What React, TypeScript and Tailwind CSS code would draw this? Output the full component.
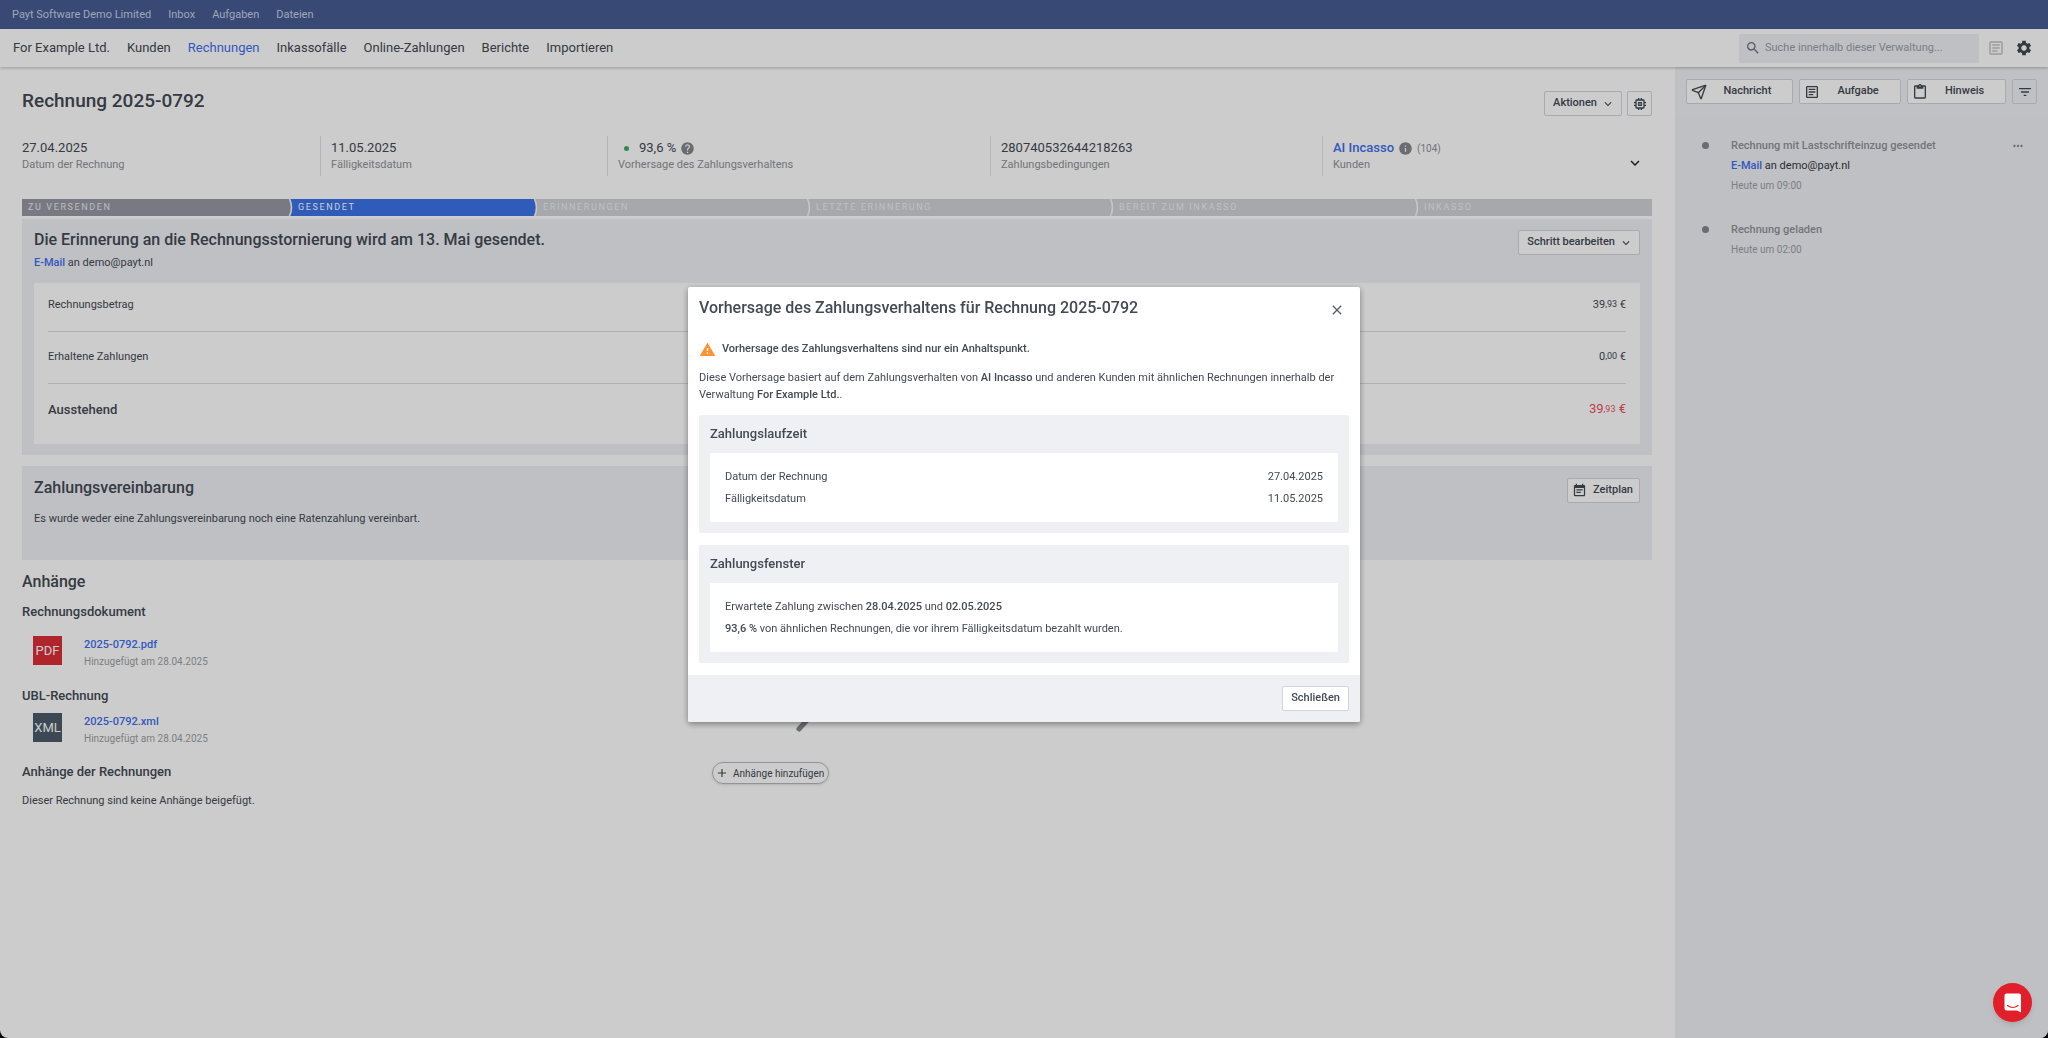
import { ReactNode, useState } from 'react';
import {
  MdAdd,
  MdClose,
  MdContentPaste,
  MdEventNote,
  MdFilterList,
  MdHelp,
  MdInfo,
  MdKeyboardArrowDown,
  MdMemory,
  MdMoreHoriz,
  MdOutlineArticle,
  MdSearch,
  MdSettings,
  MdWarning
} from 'react-icons/md';
import { Send } from 'lucide-react';

const topLinks = ['Payt Software Demo Limited', 'Inbox', 'Aufgaben', 'Dateien'];

const navLinks = [
  'For Example Ltd.',
  'Kunden',
  'Rechnungen',
  'Inkassofälle',
  'Online-Zahlungen',
  'Berichte',
  'Importieren'
];

// Button Component
interface ButtonProps {
  children?: ReactNode;
  label?: string;
  onClick?: () => void;
  className?: string;
}

function Button({ children, label, onClick, className = '' }: ButtonProps) {
  return (
    <button
      type="button"
      aria-label={label}
      onClick={onClick}
      className={`flex h-[25px] items-center rounded-[2px] border border-[#d3d5db] text-[11px] font-medium text-[#434a54] ${className}`}
    >
      {children}
    </button>
  );
}

// Top bars
function Header() {
  return (
    <header>
      <div className="flex h-[29px] items-center gap-[17px] bg-[#465c94] px-3 pt-px text-[11px] text-[#c9d0e2]">
        {topLinks.map((link) => (
          <a key={link} href="#">{link}</a>
        ))}
      </div>
      <div className="relative flex h-[38px] items-center bg-white pr-[15px] pl-[13px] shadow-[0_1px_3px_rgba(0,0,0,0.25)]">
        <nav className="flex flex-1 gap-[17px] text-[13px]">
          {navLinks.map((link) => (
            <a key={link} href="#" className={link === 'Rechnungen' ? 'text-[#3f6fee]' : 'text-[#434a54]'}>
              {link}
            </a>
          ))}
        </nav>
        <label className="flex h-[29px] w-60 items-center gap-1 rounded-[2px] bg-[#eff0f4] px-1.5 text-[#6d727b]">
          <MdSearch className="size-4 shrink-0" />
          <input
            type="search"
            aria-label="Suche"
            placeholder="Suche innerhalb dieser Verwaltung..."
            className="w-full bg-transparent text-[11px] outline-none placeholder:text-[#9a9ea6]"
          />
        </label>
        <button type="button" aria-label="Notizen" className="ml-2 text-[#c3c5ca]">
          <MdOutlineArticle className="size-[18px]" />
        </button>
        <button type="button" aria-label="Einstellungen" className="ml-2.5 text-[#434a54]">
          <MdSettings className="size-[18px]" />
        </button>
      </div>
    </header>
  );
}

// Invoice facts
interface FactProps {
  label: string;
  first?: boolean;
  children: ReactNode;
}

function Fact({ label, first = false, children }: FactProps) {
  return (
    <div className={`flex flex-col pt-1 ${first ? '' : 'border-l border-[#e2e3e7] pl-2.5'}`}>
      <div className="flex h-4 items-center text-[13px] text-[#434a54]">{children}</div>
      <div className="text-[11px] leading-[18px] text-[#8f9298]">{label}</div>
    </div>
  );
}

function Facts() {
  return (
    <div className="mt-5 grid h-10 grid-cols-[298fr_287fr_383fr_332fr_330fr]">
      <Fact label="Datum der Rechnung" first>27.04.2025</Fact>
      <Fact label="Fälligkeitsdatum">11.05.2025</Fact>
      <Fact label="Vorhersage des Zahlungsverhaltens">
        <span className="mr-2.5 ml-1.5 size-[5px] rounded-full bg-[#3fae62]"></span>
        93,6 %
        <MdHelp className="ml-1 size-[15px] text-[#85888f]" />
      </Fact>
      <Fact label="Zahlungsbedingungen">280740532644218263</Fact>
      <div className="flex justify-between border-l border-[#e2e3e7] pr-2 pl-2.5">
        <Fact label="Kunden" first>
          <a href="#" className="font-medium text-[#3f6fee]">AI Incasso</a>
          <MdInfo className="mx-1 size-[15px] text-[#85888f]" />
          <span className="text-[10px] text-[#8f9298]">(104)</span>
        </Fact>
        <button type="button" aria-label="Mehr anzeigen" className="mb-1 self-end text-[#22262c]">
          <MdKeyboardArrowDown className="size-[18px]" />
        </button>
      </div>
    </div>
  );
}

// Workflow steps
const steps = [
  { label: 'ZU VERSENDEN', className: 'bg-[#9698a3] text-[#e9eaee]', tip: '' },
  { label: 'GESENDET', className: 'bg-[#3b73ea] text-white', tip: 'fill-[#9698a3]' },
  { label: 'ERINNERUNGEN', className: 'bg-[#d0d2d6] text-[#eff0f4]', tip: 'fill-[#3b73ea]' },
  { label: 'LETZTE ERINNERUNG', className: 'bg-[#d0d2d6] text-[#eff0f4]', tip: 'fill-[#d0d2d6]' },
  { label: 'BEREIT ZUM INKASSO', className: 'bg-[#d0d2d6] text-[#eff0f4]', tip: 'fill-[#d0d2d6]' },
  { label: 'INKASSO', className: 'bg-[#d0d2d6] text-[#eff0f4]', tip: 'fill-[#d0d2d6]' }
];

function Steps() {
  return (
    <ol className="mt-[23px] grid grid-cols-[268fr_245fr_273fr_303fr_305fr_236fr]">
      {steps.map((step) => (
        <li
          key={step.label}
          className={`relative flex h-[17px] items-center pl-2 text-[9px] tracking-[0.18em] first:pl-1.5 ${step.className}`}
        >
          {step.tip && (
            <svg viewBox="0 0 6 17" className="absolute top-0 -left-0.5 h-[17px] w-1.5">
              <path d="M0 0H1.5Q5.5 8.5 1.5 17H0Z" className={step.tip} />
              <path d="M1.5 0Q5.5 8.5 1.5 17" fill="none" stroke="#f7f8fa" strokeWidth={1.6} />
            </svg>
          )}
          {step.label}
        </li>
      ))}
    </ol>
  );
}

// Amount Component
function Amount({ whole, cents }: { whole: string; cents: string }) {
  return (
    <>
      {whole}
      <span className="relative -top-px text-[9px]">,{cents}</span> €
    </>
  );
}

function StepPanel() {
  return (
    <section className="mt-[3px] bg-[#eff0f4] px-3 pt-[11px] pb-[11px]">
      <div className="flex items-start justify-between">
        <div>
          <h2 className="text-base leading-5 font-medium text-[#434a54]">
            Die Erinnerung an die Rechnungsstornierung wird am 13. Mai gesendet.
          </h2>
          <p className="mt-[5px] text-[11px] leading-4 text-[#434a54]">
            <a href="#" className="font-medium text-[#3f6fee]">E-Mail</a> an demo@payt.nl
          </p>
        </div>
        <Button className="gap-1 bg-white pr-1.5 pl-2">
          Schritt bearbeiten <MdKeyboardArrowDown className="size-3.5" />
        </Button>
      </div>
      <div className="mt-3 bg-white px-3.5 pb-6">
        <table className="w-full text-[11px] leading-5 text-[#434a54]">
          <tbody>
            <tr className="border-b border-[#dcdde1]">
              <th className="pt-3 pb-4 text-left font-normal">Rechnungsbetrag</th>
              <td className="pt-3 pb-4 text-right"><Amount whole="39" cents="93" /></td>
            </tr>
            <tr className="border-b border-[#dcdde1]">
              <th className="pt-[15px] pb-4 text-left font-normal">Erhaltene Zahlungen</th>
              <td className="pt-[15px] pb-4 text-right"><Amount whole="0" cents="00" /></td>
            </tr>
            <tr className="text-[13px]">
              <th className="pt-[15px] text-left font-medium">Ausstehend</th>
              <td className="pt-[15px] text-right text-[#ee4f5f]"><Amount whole="39" cents="93" /></td>
            </tr>
          </tbody>
        </table>
      </div>
    </section>
  );
}

function AgreementPanel() {
  return (
    <section className="mt-[11px] flex items-start justify-between bg-[#eff0f4] px-3 pt-3 pb-[31px]">
      <div>
        <h2 className="text-base leading-5 font-medium text-[#434a54]">Zahlungsvereinbarung</h2>
        <p className="mt-[11px] text-[11px] leading-5 text-[#434a54]">
          Es wurde weder eine Zahlungsvereinbarung noch eine Ratenzahlung vereinbart.
        </p>
      </div>
      <Button className="gap-1.5 bg-white pr-1.5 pl-1">
        <MdEventNote className="size-[15px]" /> Zeitplan
      </Button>
    </section>
  );
}

// Attachments
interface FileRowProps {
  type: string;
  name: string;
  className: string;
}

function FileRow({ type, name, className }: FileRowProps) {
  return (
    <div className={`flex gap-[22px] pl-[11px] ${className}`}>
      <div
        className={`flex size-[29px] items-center justify-center text-[13px] text-white ${type === 'PDF' ? 'bg-[#dc2f38]' : 'bg-[#4c5c6b]'}`}
      >
        {type}
      </div>
      <div className="leading-[17px]">
        <a href="#" className="block text-[11px] font-medium text-[#3f6fee]">{name}</a>
        <p className="text-[10px] text-[#9c9fa5]">Hinzugefügt am 28.04.2025</p>
      </div>
    </div>
  );
}

function Attachments() {
  return (
    <section className="mt-2.5 grid grid-cols-[690fr_940fr] text-[#434a54]">
      <div>
        <h2 className="text-base leading-6 font-medium">Anhänge</h2>
        <h3 className="mt-2 text-[13px] leading-5 font-medium">Rechnungsdokument</h3>
        <FileRow type="PDF" name="2025-0792.pdf" className="mt-3.5" />
        <h3 className="mt-4 text-[13px] leading-5 font-medium">UBL-Rechnung</h3>
        <FileRow type="XML" name="2025-0792.xml" className="mt-[7px]" />
        <h3 className="mt-[15px] text-[13px] leading-5 font-medium">Anhänge der Rechnungen</h3>
        <p className="mt-[9px] text-[11px] leading-5">Dieser Rechnung sind keine Anhänge beigefügt.</p>
      </div>
      <div className="flex flex-col items-start">
        <svg viewBox="0 0 76 76" className="mt-[86px] ml-[82px] size-[76px]" fill="none" stroke="#85888f" strokeWidth={5} strokeLinecap="round">
          <circle cx="42" cy="36" r="24" />
          <path d="M5 73L23 53" />
        </svg>
        <button
          type="button"
          className="mt-[30px] flex h-[22px] items-center gap-1 rounded-full border border-[#b6b8be] pr-1 pl-0.5 text-[10px] shadow-sm"
        >
          <MdAdd className="size-3.5" /> Anhänge hinzufügen
        </button>
      </div>
    </section>
  );
}

// Sidebar with the history
interface EventProps {
  title: string;
  time: string;
  mail?: boolean;
}

function HistoryEvent({ title, time, mail = false }: EventProps) {
  return (
    <li className="flex text-[11px] leading-5">
      <span className="mt-1.5 mr-[22px] size-[7px] rounded-full bg-[#85888f]"></span>
      <div className="flex-1">
        <h3 className="font-medium text-[#8f9298]">{title}</h3>
        {mail && (
          <p className="text-[#333941]">
            <a href="#" className="font-medium text-[#3f6fee]">E-Mail</a> an demo@payt.nl
          </p>
        )}
        <p className="text-[10px] text-[#9c9fa5]">{time}</p>
      </div>
      {mail && (
        <button type="button" aria-label="Mehr" className="h-5 text-[#85888f]">
          <MdMoreHoriz className="size-3.5" />
        </button>
      )}
    </li>
  );
}

function Sidebar() {
  return (
    <aside className="w-[373px] shrink-0 bg-[#eff0f4]">
      <div className="flex h-[49px] items-center gap-1.5 bg-[#f1f2f5] pr-[11px] pl-[11px]">
        <Button className="flex-[107] bg-white pr-1 pl-1">
          <Send className="size-4" strokeWidth={2} />
          <span className="flex-1 text-center">Nachricht</span>
        </Button>
        <Button className="flex-[102] bg-white pr-1 pl-1">
          <MdOutlineArticle className="size-4" />
          <span className="flex-1 text-center">Aufgabe</span>
        </Button>
        <Button className="flex-[98] bg-white pr-1 pl-1">
          <MdContentPaste className="size-4" />
          <span className="flex-1 text-center">Hinweis</span>
        </Button>
        <Button label="Filter" className="w-[25px] justify-center">
          <MdFilterList className="size-4" />
        </Button>
      </div>
      <ul className="flex flex-col gap-6 pt-5 pr-[23px] pl-[27px]">
        <HistoryEvent title="Rechnung mit Lastschrifteinzug gesendet" time="Heute um 09:00" mail />
        <HistoryEvent title="Rechnung geladen" time="Heute um 02:00" />
      </ul>
    </aside>
  );
}

// Forecast dialog
function DialogCard({ title, children }: { title: string; children: ReactNode }) {
  return (
    <section className="mt-3 rounded-[2px] bg-[#eff0f4] px-[11px] pt-[9px] pb-[11px]">
      <h3 className="text-[13px] leading-5 font-medium">{title}</h3>
      <div className="mt-[9px] bg-white px-[15px] pt-[13px] pb-3 leading-[22px]">{children}</div>
    </section>
  );
}

function ForecastDialog({ onClose }: { onClose: () => void }) {
  return (
    <div className="fixed inset-0 flex items-start justify-center bg-black/20 pt-[287px]">
      <div
        role="dialog"
        aria-modal="true"
        aria-labelledby="forecast-title"
        className="w-[672px] overflow-hidden rounded-[2px] bg-white text-[11px] text-[#434a54] shadow-[0_2px_6px_rgba(0,0,0,0.4)]"
      >
        <div className="px-[11px] pb-3">
          <div className="flex items-start justify-between pt-[9px]">
            <h2 id="forecast-title" className="text-base leading-6 font-medium">
              Vorhersage des Zahlungsverhaltens für Rechnung 2025-0792
            </h2>
            <button type="button" aria-label="Fenster schließen" onClick={onClose} className="mt-1.5 mr-1 text-[#5a606a]">
              <MdClose className="size-4" />
            </button>
          </div>
          <p className="mt-[19px] flex items-center gap-1.5 leading-5 font-medium">
            <MdWarning className="size-[17px] text-[#ff9233]" />
            Vorhersage des Zahlungsverhaltens sind nur ein Anhaltspunkt.
          </p>
          <p className="mt-2.5 leading-[17px]">
            Diese Vorhersage basiert auf dem Zahlungsverhalten von <b className="font-medium">AI Incasso</b> und anderen
            Kunden mit ähnlichen Rechnungen innerhalb der Verwaltung <b className="font-medium">For Example Ltd.</b>.
          </p>
          <DialogCard title="Zahlungslaufzeit">
            <table className="w-full">
              <tbody>
                <tr>
                  <th className="text-left font-normal">Datum der Rechnung</th>
                  <td className="text-right">27.04.2025</td>
                </tr>
                <tr>
                  <th className="text-left font-normal">Fälligkeitsdatum</th>
                  <td className="text-right">11.05.2025</td>
                </tr>
              </tbody>
            </table>
          </DialogCard>
          <DialogCard title="Zahlungsfenster">
            <p>
              Erwartete Zahlung zwischen <b className="font-medium">28.04.2025</b> und{' '}
              <b className="font-medium">02.05.2025</b>
            </p>
            <p>
              <b className="font-medium">93,6 %</b> von ähnlichen Rechnungen, die vor ihrem Fälligkeitsdatum bezahlt wurden.
            </p>
          </DialogCard>
        </div>
        <div className="flex justify-end bg-[#eff0f4] p-[11px]">
          <Button onClick={onClose} className="bg-white px-2">Schließen</Button>
        </div>
      </div>
    </div>
  );
}

export default function App() {
  const [open, setOpen] = useState(true);

  return (
    <div className="bg-black font-['Roboto',sans-serif]">
      <div className="flex min-h-screen flex-col overflow-hidden rounded-b-lg bg-white">
        <Header />
        <div className="flex flex-1">
          <main className="min-w-0 flex-1 pt-6 pr-[23px] pb-6 pl-[22px]">
            <div className="flex items-start justify-between">
              <h1 className="text-[19px] leading-5 font-medium text-[#434a54]">Rechnung 2025-0792</h1>
              <div className="flex gap-[5px]">
                <Button className="gap-1 bg-white pr-1.5 pl-2">
                  Aktionen <MdKeyboardArrowDown className="size-3.5" />
                </Button>
                <Button label="Automatisierung" className="w-[25px] justify-center bg-white">
                  <MdMemory className="size-4" />
                </Button>
              </div>
            </div>
            <Facts />
            <Steps />
            <StepPanel />
            <AgreementPanel />
            <Attachments />
          </main>
          <Sidebar />
        </div>
      </div>
      {open && <ForecastDialog onClose={() => setOpen(false)} />}
      <button
        type="button"
        aria-label="Chat öffnen"
        className="fixed right-4 bottom-4 flex size-[39px] items-center justify-center rounded-full bg-[#e01f2a] shadow-md"
      >
        <svg viewBox="0 0 18 20" className="h-5 w-[18px]">
          <path d="M2.5 0.5H15Q17 0.5 17 2.5V19.5L13 17.5H2.5Q0.5 17.5 0.5 15.5V2.5Q0.5 0.5 2.5 0.5Z" fill="#fff" />
          <path d="M3.5 12.5Q8.7 16.5 14 12.5" fill="none" stroke="#e01f2a" strokeWidth={1.2} strokeLinecap="round" />
        </svg>
      </button>
    </div>
  );
}
